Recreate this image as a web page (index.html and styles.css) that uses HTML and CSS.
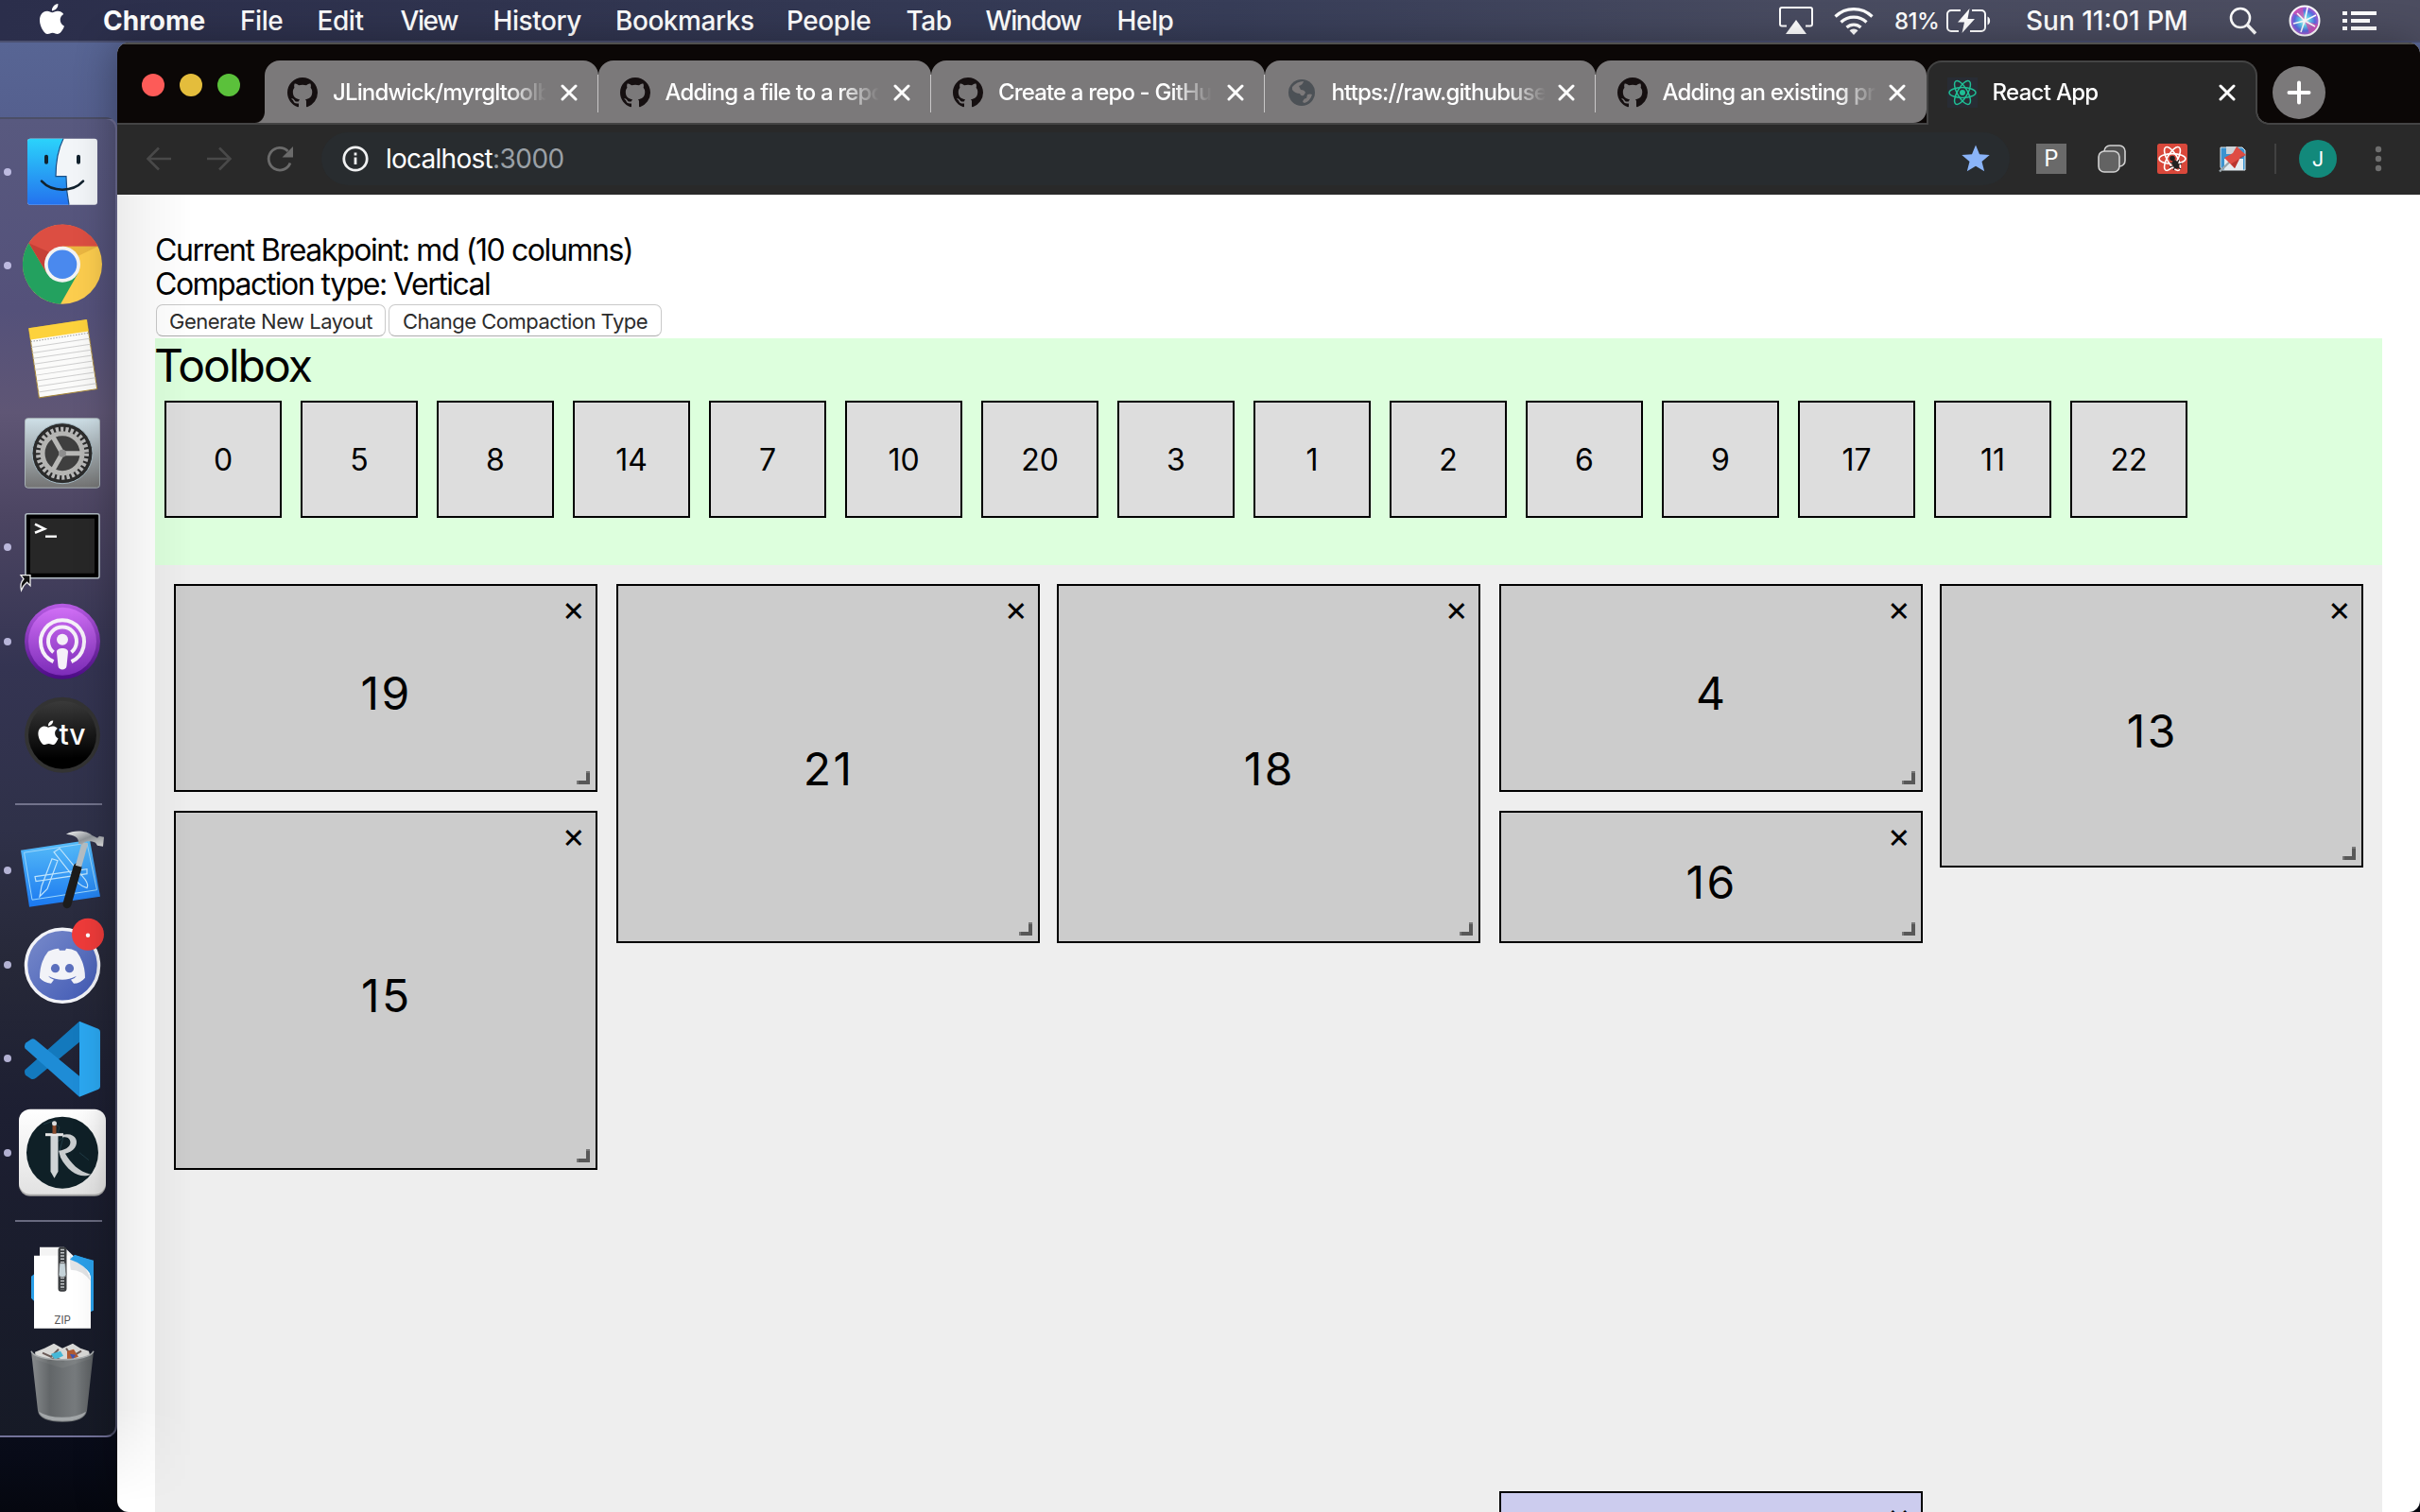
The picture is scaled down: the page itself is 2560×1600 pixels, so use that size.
FILE: index.html
```html
<!DOCTYPE html>
<html lang="en">
<head>
<meta charset="utf-8">
<title>React App</title>
<link rel="stylesheet" href="styles.css">
</head>
<body>
<svg class="defs" aria-hidden="true">
  <defs>
    <symbol id="github" viewBox="0 0 16 16"><path d="M8 0C3.58 0 0 3.58 0 8c0 3.54 2.29 6.53 5.47 7.59.4.07.55-.17.55-.38 0-.19-.01-.82-.01-1.49-2.01.37-2.53-.49-2.69-.94-.09-.23-.48-.94-.82-1.13-.28-.15-.68-.52-.01-.53.63-.01 1.08.58 1.23.82.72 1.21 1.87.87 2.33.66.07-.52.28-.87.51-1.07-1.78-.2-3.64-.89-3.64-3.95 0-.87.31-1.59.82-2.15-.08-.2-.36-1.02.08-2.12 0 0 .67-.21 2.2.82.64-.18 1.32-.27 2-.27s1.36.09 2 .27c1.53-1.04 2.2-.82 2.2-.82.44 1.1.16 1.92.08 2.12.51.56.82 1.27.82 2.15 0 3.07-1.87 3.75-3.65 3.95.29.25.54.73.54 1.48 0 1.07-.01 1.93-.01 2.2 0 .21.15.46.55.38A8.01 8.01 0 0 0 16 8c0-4.42-3.58-8-8-8z"/></symbol>
    <symbol id="apple" viewBox="0 0 24 24"><path d="M12.152 6.896c-.948 0-2.415-1.078-3.96-1.04-2.04.027-3.91 1.183-4.961 3.014-2.117 3.675-.546 9.103 1.519 12.09 1.013 1.454 2.208 3.09 3.792 3.039 1.52-.065 2.09-.987 3.935-.987 1.831 0 2.35.987 3.96.948 1.637-.026 2.676-1.48 3.676-2.948 1.156-1.688 1.636-3.325 1.662-3.415-.039-.013-3.182-1.221-3.22-4.857-.026-3.04 2.48-4.494 2.597-4.559-1.429-2.09-3.623-2.324-4.39-2.376-2-.156-3.675 1.09-4.61 1.09zM15.53 3.83c.843-1.012 1.4-2.427 1.245-3.83-1.207.052-2.662.805-3.532 1.818-.78.896-1.454 2.338-1.273 3.714 1.338.104 2.715-.688 3.559-1.701"/></symbol>
    <symbol id="cross" viewBox="0 0 18 18"><path d="M2 2l14 14M16 2L2 16" fill="none" stroke="#fff" stroke-width="3" stroke-linecap="round"/></symbol>
    <symbol id="atom" viewBox="-16 -16 32 32"><g fill="none"><ellipse rx="14" ry="5.4"/><ellipse rx="14" ry="5.4" transform="rotate(60)"/><ellipse rx="14" ry="5.4" transform="rotate(120)"/></g></symbol>
    <linearGradient id="finderBlue" x2="0" y2="1"><stop offset="0" stop-color="#2bd3fb"/><stop offset="1" stop-color="#2472ee"/></linearGradient>
    <linearGradient id="prefsBg" x2="0" y2="1"><stop offset="0" stop-color="#cfe0e8"/><stop offset="1" stop-color="#737373"/></linearGradient>
    <linearGradient id="podBg" x2="0" y2="1"><stop offset="0" stop-color="#d06ff5"/><stop offset="1" stop-color="#7c2cb8"/></linearGradient>
    <linearGradient id="podRim" x2="0" y2="1"><stop offset="0" stop-color="#b85ce4"/><stop offset="1" stop-color="#4b0b85"/></linearGradient>
    <linearGradient id="tvBg" x2="0" y2="1"><stop offset="0" stop-color="#3a3a3a"/><stop offset=".85" stop-color="#000"/></linearGradient>
    <linearGradient id="xcodeBg" x2="0" y2="1"><stop offset="0" stop-color="#57bdf8"/><stop offset="1" stop-color="#1a78f0"/></linearGradient>
    <linearGradient id="steel" x2="1" y2="1"><stop offset="0" stop-color="#f4f4f4"/><stop offset=".5" stop-color="#8f9499"/><stop offset="1" stop-color="#e8e8e8"/></linearGradient>
    <linearGradient id="discordBg" x2="1" y2="1"><stop offset="0" stop-color="#7a8ccb"/><stop offset="1" stop-color="#3f58b4"/></linearGradient>
    <linearGradient id="runeBg" x2="0" y2="1"><stop offset="0" stop-color="#fff"/><stop offset="1" stop-color="#e2e2e2"/></linearGradient>
    <linearGradient id="binBg"><stop offset="0" stop-color="#8d9092"/><stop offset=".3" stop-color="#65696b"/><stop offset=".7" stop-color="#7b7f81"/><stop offset="1" stop-color="#5c6062"/></linearGradient>
    <radialGradient id="siriBg"><stop offset="0" stop-color="#fff"/><stop offset=".35" stop-color="#5fd0ee"/><stop offset=".7" stop-color="#5a6be0"/><stop offset="1" stop-color="#c45bd0"/></radialGradient>
  </defs>
</svg>

<header class="menubar">
  <svg class="apple-logo"><use href="#apple"/></svg>
  <nav class="menus">
    <span class="app-name">Chrome</span><span>File</span><span>Edit</span><span class="tight">View</span><span>History</span><span>Bookmarks</span><span>People</span><span>Tab</span><span class="tight">Window</span><span>Help</span>
  </nav>
  <div class="status">
    <svg width="36" height="30" viewBox="0 0 36 30"><path d="M8 20.500H3a2 2 0 0 1-2-2V3a2 2 0 0 1 2-2h30a2 2 0 0 1 2 2v15.500a2 2 0 0 1-2 2h-5" fill="none" stroke="#fff" stroke-width="2"/><path d="M18 14l11 15H7z" fill="#fff"/></svg>
    <svg class="wifi" width="42" height="30" viewBox="0 0 42 30"><g fill="none" stroke="#fff" stroke-width="3.200"><path d="M1.500 10.500a28 28 0 0 1 39 0"/><path d="M7.500 16.500a19.500 19.500 0 0 1 27 0"/><path d="M13.500 22a11 11 0 0 1 15 0"/></g><path d="M21 30l-4.500-4.800a6.500 6.500 0 0 1 9 0z" fill="#fff"/></svg>
    <span class="battery-level">81%</span>
    <svg class="battery" width="48" height="26" viewBox="0 0 48 26"><g fill="none" stroke="#fff" stroke-width="2"><path d="M15 2H5a4 4 0 0 0-4 4v14a4 4 0 0 0 4 4h8M27 2h10a4 4 0 0 1 4 4v14a4 4 0 0 1-4 4H25"/></g><path d="M43.500 8.500c3.500 1 3.500 8 0 9z" fill="#fff"/><path d="M24.500 0L12 14.500h7L16.500 26 30 11h-7.500z" fill="#fff"/></svg>
    <span class="clock">Sun 11:01 PM</span>
    <svg class="search" width="30" height="30" viewBox="0 0 30 30"><g fill="none" stroke="#fff" stroke-width="2.600"><circle cx="12" cy="12" r="10"/><path d="M19.500 19.500L28 28.500" stroke-width="3.400"/></g></svg>
    <svg class="siri" width="34" height="34" viewBox="0 0 34 34"><circle cx="17" cy="17" r="15.500" fill="url(#siriBg)" stroke="#fff" stroke-width="2"/><path d="M17 17L5 9a14 14 0 0 1 10-6zM17 17l5 13a14 14 0 0 0 9-9z" fill="#e14fae" opacity=".7"/><path d="M17 17L29 11M17 17L5 20M17 17l-4 12M17 17l3-14M17 17l11 6M17 17l-8-8" stroke="#fff" stroke-width="1.600"/></svg>
    <svg class="list" width="36" height="20" viewBox="0 0 36 20"><path d="M0 2h5M9 2h27M0 10h5M9 10h20M0 18h5M9 18h27" stroke="#fff" stroke-width="4"/></svg>
  </div>
</header>

<main class="desktop">
  <aside class="dock">
    <div class="slot running"><svg viewBox="0 -49.700 124 99.400">
      <rect x="29" y="-35" width="74" height="70" rx="3" fill="#f2f5f8"/>
      <path d="M32-35H67c-6 12-8 26-8 40h11c0 10 1 20 3 30H32a3 3 0 0 1-3-3v-64a3 3 0 0 1 3-3z" fill="url(#finderBlue)"/>
      <path d="M67-35c-6 12-8 26-8 40h11c0 10 1 20 3 30" fill="none" stroke="#1c4f86" stroke-width="1.200"/>
      <path d="M49-16v6M83-16v6" stroke="#12222e" stroke-width="4" stroke-linecap="round"/><path d="M44 10c11 12 33 12 44 0" fill="none" stroke="#12222e" stroke-width="2.600" stroke-linecap="round"/></svg></div>
    <div class="slot running"><svg viewBox="0 -49.700 124 99.400"><g transform="translate(66 -1)">
      <circle r="42" fill="#fccd4e"/><path d="M-35.500-22.500A42 42 0 0 1 37.700-19H0L-16.500 9.500z" fill="#dc4e42"/><path d="M-35.500-22.500A42 42 0 0 0-2 42L16.500 9.500-16.500 9.500z" fill="#23a15f"/>
      <path d="M-35.500-22.500L-16.500 9.500-14-13z" fill="#b8362f" opacity=".6"/><path d="M37.700-19H0L17-9z" fill="#e0a93a" opacity=".6"/>
      <circle r="19" fill="#f3f3f3"/><circle r="15.300" fill="#4a89ee"/></g></svg></div>
    <div class="slot"><svg viewBox="0 -49.700 124 99.400"><g transform="translate(66.500 -1.500) rotate(-8.500)">
      <rect x="-31" y="-36.500" width="62" height="74" fill="#fbfbfa" stroke="#a98a3c"/><rect x="-31" y="-37" width="62" height="12.500" fill="#fdd23c"/>
      <path d="M-31-16.500h62M-31-10.500h62M-31-4.500h62M-31 1.500h62M-31 7.500h62M-31 13.500h62M-31 19.500h62M-31 25.500h62M-31 31.500h62" stroke="#cfcfcf" stroke-width="1"/><path d="M-31-22.500h62" stroke="#999" stroke-dasharray="1.500 1.500"/></g></svg></div>
    <div class="slot"><svg viewBox="0 -49.700 124 99.400">
      <rect x="26.500" y="-37" width="79" height="73.500" rx="3" fill="url(#prefsBg)" stroke="#a9b3b8"/><circle cx="66" cy="0" r="32" fill="#2b2b2b" stroke="#a6bac4" stroke-width="1"/>
      <circle cx="66" cy="0" r="25.500" fill="none" stroke="#b8b8b8" stroke-width="5" stroke-dasharray="3.200 2.140"/><circle cx="66" cy="0" r="21" fill="#3f3f3f" stroke="#b5b5b3" stroke-width="5"/>
      <path d="M66 0h20M66 0L56-17.500M66 0L56 17.500" stroke="#b8b8b6" stroke-width="5"/><circle cx="66" cy="0" r="4" fill="#8e8e8e"/></svg></div>
    <div class="slot running"><svg viewBox="0 -49.700 124 99.400"><g transform="translate(0 -2)">
      <rect x="27" y="-34" width="78" height="68" rx="2" fill="#000" stroke="#b3bec6" stroke-width="1.600"/><rect x="32" y="-29" width="68" height="58" fill="#272727"/>
      <path d="M37-23l10 5-10 4" fill="none" stroke="#fff" stroke-width="2.600"/><path d="M48-10h12" stroke="#fff" stroke-width="2.400"/>
      <path d="M22 31h10v11l-3.500-3.500q-4 3-6 8.500-2-7 2.500-12z" fill="#111" stroke="#eee" stroke-width="1.300"/></g></svg></div>
    <div class="slot running"><svg viewBox="0 -49.700 124 99.400"><g transform="translate(66 0)">
      <circle r="40" fill="url(#podRim)"/><circle r="36" fill="url(#podBg)"/>
      <g fill="none" stroke="#f5f0f8" stroke-width="4"><path d="M-9.500 21.500A23 23 0 1 1 9.500 21.500"/><path d="M-9.500 11.500A15 15 0 1 1 9.500 11.500"/></g>
      <circle cy="-2" r="6" fill="#f5f0f8"/><path d="M-6 11c0-5 12-5 12 0l-1.500 15c-.5 5-8.500 5-9 0z" fill="#f5f0f8"/></g></svg></div>
    <div class="slot"><svg viewBox="0 -49.700 124 99.400"><circle cx="66" cy="0" r="40" fill="#333"/><circle cx="66" cy="0" r="36" fill="url(#tvBg)"/>
      <use href="#apple" x="38" y="-15.500" width="26" height="26" fill="#fff"/><text x="62.500" y="10" class="tv-label">tv</text></svg></div>
    <div class="divider"></div>
    <div class="slot running"><svg viewBox="0 -49.700 124 99.400">
      <path d="M22-22L95-33 106 27 31 38z" fill="url(#xcodeBg)"/><path d="M25.500-19.500L92-29.500 102.500 20 34 30.500z" fill="none" stroke="#9cd6fb"/>
      <g fill="none" stroke="#bfe4fc" stroke-width="1.200"><path d="M37 6l55-8v5l-54 8z"/><path d="M55-13l6 2-11 30-8 8 2-11zM57-20l6-4 27 33q4 6 2 9-6-2-9-5z"/></g>
      <path d="M82-4L71 35" stroke="#1c1c1c" stroke-width="9" stroke-linecap="round"/><path d="M90-30L83-5" stroke="#b4bec4" stroke-width="6.500"/>
      <path d="M70-39c8-5 22-4 27 1l6 3 2-2 5 1-1 10-6-1-2-3c-7-3-13-1-14 2l-4-1c1-7-5-9-13-10z" fill="url(#steel)"/></svg></div>
    <div class="slot running"><svg viewBox="0 -49.700 124 99.400"><g transform="translate(0 1)"><circle cx="66" cy="0" r="38.500" fill="url(#discordBg)" stroke="#f2f3f8" stroke-width="3.500"/>
      <path d="M51-15q7-3 11-3l1 2h6l1-2q6 0 11 3 9 12 9 28-5 6-12 6l-3-4q4-1 6-4-15 8-30 0 2 3 6 4l-3 4q-8-1-12-6 0-17 9-28z" fill="#f2f3f8"/><circle cx="58.500" cy="3" r="4.600" fill="#5b6fbd"/><circle cx="73.500" cy="3" r="4.600" fill="#5b6fbd"/>
      <circle cx="93" cy="-33" r="17" fill="#ef3b3a"/><circle cx="93" cy="-32" r="2.200" fill="#fff"/></g></svg></div>
    <div class="slot running"><svg viewBox="0 -49.700 124 99.400">
      <path d="M26 13q0-2 2-3L84-40v22L38 20q-3 2-5 1l-6-4q-1-2-1-4z" fill="#1379bd"/><path d="M26-13q0 2 2 3L84 40V18L38-20q-3-2-5-1l-6 4q-1 2-1 4z" fill="#1e8cd6"/>
      <path d="M84-40l20 8q2 1 2 3v58q0 2-2 3L84 40z" fill="#2ba7f0"/></svg></div>
    <div class="slot running"><svg viewBox="0 -49.700 124 99.400">
      <rect x="20" y="-45" width="92" height="91" rx="12" fill="#a9a9a9"/><rect x="20" y="-46" width="92" height="90" rx="12" fill="url(#runeBg)"/><circle cx="66" cy="0" r="38" fill="#0f2027"/>
      <path d="M46 -30l9-3 8 6-6 18 10-7-4 14M84 0l10 8" fill="none" stroke="#1f3a44" stroke-width="1"/>
      <path d="M53.500-18h8v38l-4 7-4-7z" fill="#cfd3d5"/><path d="M48-19h19" stroke="#e6e6e6" stroke-width="3"/><path d="M57.500-29v9" stroke="#8a4a2c" stroke-width="4"/><circle cx="57.500" cy="-31" r="2.500" fill="#ddd"/>
      <path d="M66-19c14-3 18 7 13 14-2 3-6 5-10 6 6 10 14 19 27 22-10 5-24-2-32-18l-2-7c9-1 14-6 12-11-1-3-5-4-8-3z" fill="#c9ccce"/></svg></div>
    <div class="divider"></div>
    <div class="slot"><svg viewBox="0 -49.700 124 99.400">
      <path d="M33-12l5-4v32l-5-5zM80-34l19 5v53l-9 4z" fill="#2a9fe8"/><path d="M42-43h26l27 26v50H42z" fill="#f4f4f4"/><path d="M36-34h38q14 0 22 22v55H36z" fill="#fff"/><path d="M74-34q0 12 1 15 12 0 21 12-4-18-22-27z" fill="#e2e4e6"/><path d="M74-30l5-5 18 6v16q-8-12-23-17z" fill="#2a9fe8"/>
      <rect x="61.500" y="-43" width="9" height="47" rx="3" fill="#3a3d40"/><path d="M66-41V2" stroke="#c2c6c9" stroke-width="4" stroke-dasharray="1.500 1.800"/><path d="M63-26h6l1 12q0 3-4 3t-4-3z" fill="#c5d3d9" stroke="#666" stroke-width=".8"/>
      <text x="66" y="38" class="zip-label">ZIP</text></svg></div>
    <div class="slot"><svg viewBox="0 -49.700 124 99.400">
      <path d="M37-32l10-4 10-5 9 5 11-5 8 5 9 3 2 8-30 10-28-9z" fill="#d9d9d7"/><path d="M45-31l9 4 8-8M70-36l6 9 10-6M50-22l8-4 10 4" stroke="#6a5b58" stroke-width="2" fill="none"/><path d="M54-30l10-3 3 5-9 4z" fill="#46b8d8"/><path d="M71-33l7-2 5 8-12 4z" fill="#b05b34"/><path d="M74-30l6 1-3 5z" fill="#4054b0"/>
      <path d="M33-33c4 12 62 12 66 0l-7 63q-2 12-26 12t-26-12z" fill="url(#binBg)" opacity=".96"/><path d="M33-33c4 12 62 12 66 0" fill="none" stroke="#a9adaf" stroke-width="1.500"/><path d="M41 31q3 10 25 10t25-10q-9 6-25 6t-25-6z" fill="#a3a7a9"/></svg></div>
  </aside>

  <section class="window">
    <div class="tabstrip">
      <div class="lights"><i class="close"></i><i class="minimise"></i><i class="zoom"></i></div>
      <div class="tab first"><svg class="favicon"><use href="#github"/></svg><span class="title">JLindwick/myrgltoolb</span><svg class="x"><use href="#cross"/></svg></div>
      <div class="tab"><svg class="favicon"><use href="#github"/></svg><span class="title">Adding a file to a repo</span><svg class="x"><use href="#cross"/></svg></div>
      <div class="tab"><svg class="favicon"><use href="#github"/></svg><span class="title">Create a repo - GitHu</span><svg class="x"><use href="#cross"/></svg></div>
      <div class="tab narrow"><svg class="favicon" viewBox="0 0 32 32"><circle cx="16" cy="16" r="14" fill="#4c5156"/><path d="M6 10q5-6 12-6-1 4-5 5l2 4q4 0 5 3l-2 3q-3 1-4-2-5 0-8-4zM17 26q1-4 4-4l1-4q3-1 5 0-2 7-8 9z" fill="#7c797a"/></svg><span class="title">https://raw.githubuse</span><svg class="x"><use href="#cross"/></svg></div>
      <div class="tab narrow last"><svg class="favicon"><use href="#github"/></svg><span class="title">Adding an existing pr</span><svg class="x"><use href="#cross"/></svg></div>
      <div class="tab narrow active"><svg class="favicon react" viewBox="0 0 32 32"><rect width="32" height="32" fill="#282c34"/><use href="#atom" width="32" height="32" stroke="#1fbf95" stroke-width="1.500"/><circle cx="16" cy="16" r="3" fill="#1fbf95"/></svg><span class="title">React App</span><svg class="x"><use href="#cross"/></svg></div>
      <div class="new-tab"><svg width="24" height="24" viewBox="0 0 24 24"><path d="M12 1.500v21M1.500 12h21" stroke="#fff" stroke-width="4" stroke-linecap="round"/></svg></div>
    </div>

    <div class="toolbar">
      <svg class="nav-icon" viewBox="0 0 32 32"><path d="M29 16H5M16 4.500L4.500 16 16 27.500" fill="none" stroke="#494949" stroke-width="2.600"/></svg>
      <svg class="nav-icon" viewBox="0 0 32 32"><path d="M3 16h24M16 4.500L27.500 16 16 27.500" fill="none" stroke="#494949" stroke-width="2.600"/></svg>
      <svg class="nav-icon" viewBox="0 0 32 32"><path d="M27 20.500A11.800 11.800 0 1 1 24.500 8" fill="none" stroke="#6b6b6b" stroke-width="2.800"/><path d="M30 3v11.500H18.500z" fill="#6b6b6b"/></svg>
      <div class="omnibox">
        <svg width="32" height="32" viewBox="0 0 32 32"><circle cx="16" cy="16" r="12.200" fill="none" stroke="#f0f1f2" stroke-width="2.800"/><path d="M16 14.500V22M16 9.500v3" stroke="#f0f1f2" stroke-width="2.800"/></svg>
        <span class="host">localhost</span><span class="port">:3000</span>
        <svg class="star" width="32" height="32" viewBox="0 0 32 32"><path d="M16 1.500l4 9.800 10.700.8-8.200 6.800 2.700 10.300L16 23.700l-9.200 5.500 2.700-10.300-8.200-6.800 10.700-.8z" fill="#8ab4f8"/></svg>
      </div>
      <div class="ext-p">P</div>
      <svg class="ext" viewBox="0 0 32 32"><g stroke="#d2d2d2" stroke-width="1.600"><rect x="8" y="2" width="22" height="22" rx="6" fill="#4d4d4d"/><rect x="2" y="8" width="22" height="22" rx="6" fill="#636363"/></g></svg>
      <svg class="ext" viewBox="0 0 32 32"><rect width="32" height="32" rx="2.500" fill="#d9483b"/><use href="#atom" width="32" height="32" stroke="#fff" stroke-width="1.600"/><g stroke="#222" stroke-width="1.300"><path d="M14 20l11 7M13 25l13-4M17 28l6-11"/></g><circle cx="16" cy="15.500" r="2.800" fill="#222"/><ellipse cx="19.500" cy="22" rx="3.200" ry="5" transform="rotate(-30 19.500 22)" fill="#222"/></svg>
      <svg class="ext" viewBox="0 0 32 32"><path d="M3 4h23l3 3v21H5l-2-3z" fill="#3b93d0" stroke="#dfe9ef"/><rect x="9" y="3" width="11" height="8" fill="#ccd3d8"/><rect x="7" y="16" width="20" height="12" fill="#e4ecf1"/><path d="M14 18L2 29.500" stroke="#9aa6ad" stroke-width="2.400"/><path d="M20 3l10 9-6 2-6 12L7 15l9-5z" fill="#df4c43"/><path d="M30 12l-6 2-6 12-4-4.500z" fill="#b93630"/></svg>
      <div class="bar-divider"></div>
      <div class="avatar">J</div>
      <svg class="dots" width="8" height="28" viewBox="0 0 8 28"><g fill="#6e6e6e"><circle cx="4" cy="4" r="3.200"/><circle cx="4" cy="14" r="3.200"/><circle cx="4" cy="24" r="3.200"/></g></svg>
    </div>

    <div class="page">
      <div class="info">Current Breakpoint: md (10 columns)</div>
      <div class="info second">Compaction type: Vertical</div>
      <div class="buttons"><button class="generate">Generate New Layout</button><button class="change">Change Compaction Type</button></div>
      <div class="toolbox">
        <div class="toolbox-title">Toolbox</div>
        <div class="toolbox-items">
          <div>0</div><div>5</div><div>8</div><div>14</div><div>7</div><div>10</div><div>20</div><div>3</div><div>1</div><div>2</div><div>6</div><div>9</div><div>17</div><div>11</div><div>22</div>
        </div>
      </div>
      <div class="layout">
        <div class="item c1 r1 h3"><span>19</span><b>×</b></div>
        <div class="item c1 r4 h5"><span>15</span><b>×</b></div>
        <div class="item c2 r1 h5"><span>21</span><b>×</b></div>
        <div class="item c3 r1 h5"><span>18</span><b>×</b></div>
        <div class="item c4 r1 h3"><span>4</span><b>×</b></div>
        <div class="item c4 r4 h2"><span>16</span><b>×</b></div>
        <div class="item c5 r1 h4"><span>13</span><b>×</b></div>
        <div class="item c4 r13 h2 static"><b>×</b></div>
      </div>
    </div>
  </section>
</main>
</body>
</html>
```
FILE: styles.css
```css
*, *::before, *::after { box-sizing: border-box; }
body {
  margin: 0;
  width: 2560px;
  height: 1600px;
  overflow: hidden;
  font-family: Inter, "Liberation Sans", sans-serif;
  background: linear-gradient(180deg, #596897 0, #55608f 120px, #2a2b45 800px, #080b18 1540px, #05070f 1600px);
}
.defs { position: absolute; width: 0; height: 0; }
svg { display: block; flex: none; overflow: visible; }

/* menu bar */
.menubar {
  display: flex;
  align-items: center;
  height: 45px;
  padding: 1px 46px 0 39px;
  color: #fff;
  font-size: 28px;
  font-weight: 500;
  background: linear-gradient(90deg, #2b2e4b 0, #30344f 500px, #373d58 1300px, #484b60 1900px, #4c4d60 100%);
  border-bottom: 2px solid #4b5070;
}
.apple-logo { width: 32px; height: 32px; margin-top: -5px; fill: #fff; }
.menus {
  display: grid;
  grid-template-columns: 145px 81.5px 88px 98px 129.5px 181px 126.5px 84px 139px 70px;
  margin-left: 38px;
  letter-spacing: -0.45px;
  white-space: nowrap;
}
.menus .app-name { font-weight: 700; letter-spacing: 0; }
.menus .tight { letter-spacing: -1.4px; }
.status { display: flex; align-items: center; margin-left: auto; white-space: nowrap; }
.wifi { margin-left: 22px; }
.battery-level { margin-left: 22px; font-size: 24px; letter-spacing: -0.5px; width: 55px; }
.battery { width: 48px; }
.clock { margin-left: 36px; width: 172px; }
.search { margin-left: 43px; }
.siri { margin-left: 33px; }
.list { margin-left: 23px; }

.desktop { display: flex; height: 1555px; }

/* dock */
.dock {
  display: flex;
  flex-direction: column;
  flex: none;
  width: 124px;
  height: 1397px;
  margin-top: 79px;
  padding-top: 6px;
  border: 2px solid rgba(150, 150, 190, .42);
  border-left: 0;
  border-radius: 0 12px 12px 0;
  background: linear-gradient(180deg, #58597f 0, #54517a 200px, #5f5675 310px, #4c4562 420px, #343452 580px, #2f3149 750px, #262838 900px, #1d1f32 1050px, #161a26 1397px);
}
.slot { display: flex; align-items: center; flex: none; height: 99.4px; }
.slot svg { width: 124px; height: 99.4px; margin-left: -12px; }
.slot::before { content: ""; flex: none; width: 8px; height: 8px; margin-left: 4px; border-radius: 50%; }
.running::before { background: rgba(215, 212, 250, .8); }
.divider { flex: none; height: 44px; padding: 22px 14px 0 16px; }
.divider::before { content: ""; display: block; height: 2px; background: rgba(170, 170, 195, .55); }
.tv-label { font: 500 30px Inter, sans-serif; fill: #fff; }
.zip-label { font: 11.5px Inter, sans-serif; fill: #555; text-anchor: middle; }

/* browser window */
.window {
  position: relative;
  display: flex;
  flex-direction: column;
  width: 2436px;
  height: 1555px;
  overflow: hidden;
  border-radius: 12px;
  background: #fff;
  box-shadow: -4px 0 40px rgba(0, 0, 0, .3);
}
/* shade the dock casts on the page */
.window::after {
  content: "";
  position: absolute;
  left: 0;
  top: 161px;
  bottom: 0;
  width: 80px;
  background: linear-gradient(90deg, rgba(0, 0, 0, .075), rgba(0, 0, 0, .035) 32px, rgba(0, 0, 0, 0));
  -webkit-mask-image: linear-gradient(0deg, transparent 10px, #000 110px);
  mask-image: linear-gradient(0deg, transparent 10px, #000 110px);
}
.tabstrip {
  display: flex;
  align-items: flex-end;
  flex: none;
  height: 87px;
  background: #0b0706;
  border-top: 2px solid #50504e;
  border-bottom: 2px solid #444;
}
.lights { display: flex; gap: 16px; margin: 0 26px 28px; }
.lights i { width: 24px; height: 24px; border-radius: 50%; background: #fd5b58; }
.lights .minimise { background: #e4bd3c; }
.lights .zoom { background: #5bc13b; }
.tab {
  position: relative;
  display: flex;
  align-items: center;
  flex: none;
  width: 352.5px;
  height: 66px;
  padding: 2px 22px 0 23px;
  border-radius: 16px 16px 0 0;
  color: #fff;
  background: #7b797a;
}
.tab.first { padding-left: 24px; }
.tab.narrow { width: 350px; }
.tab.last { border-radius: 16px 16px 14px 0; }
.tab.first::before {
  content: "";
  position: absolute;
  left: -10px;
  bottom: 0;
  width: 10px;
  height: 12px;
  background: radial-gradient(ellipse at 0 0, transparent 9.5px, #7b797a 10.5px);
}
.tab:not(.active):not(.last)::after {
  content: "";
  position: absolute;
  right: -1px;
  top: 15px;
  width: 2px;
  height: 40px;
  background: #c8c7c7;
}
.tab.active {
  height: 68px;
  margin-bottom: -2px;
  background: #292929;
  border: 2px solid #444;
  border-bottom: 0;
  padding: 0 21px 2px 20px;
}
.tab.active::after {
  content: "";
  position: absolute;
  right: -14px;
  bottom: 0;
  width: 14px;
  height: 14px;
  background: radial-gradient(circle at 100% 0, transparent 11.5px, #444 12px, #444 13.5px, #292929 14px);
}
.favicon { width: 32px; height: 32px; fill: #150f10; }
.title {
  width: 226px;
  margin-left: 16px;
  font-size: 24px;
  font-weight: 500;
  letter-spacing: -0.85px;
  line-height: 34px;
  white-space: nowrap;
  -webkit-mask-image: linear-gradient(90deg, #000 185px, transparent 226px);
  mask-image: linear-gradient(90deg, #000 185px, transparent 226px);
}
.active .title { letter-spacing: -0.7px; }
.x { width: 18px; height: 18px; margin-left: auto; }
.new-tab {
  display: flex;
  align-items: center;
  justify-content: center;
  width: 56px;
  height: 56px;
  margin: 0 0 4px 16px;
  border-radius: 50%;
  background: #7b797a;
}
.toolbar {
  display: flex;
  align-items: center;
  flex: none;
  height: 74px;
  padding: 0 0 2px 28px;
  background: #292929;
}
.nav-icon { width: 32px; height: 32px; margin-right: 32px; }
.omnibox {
  display: flex;
  align-items: center;
  width: 1786px;
  height: 56px;
  margin-left: -4px;
  padding: 0 20px;
  border-radius: 28px;
  background: #282c2f;
  font-size: 28px;
}
.host { margin-left: 16px; color: #fff; letter-spacing: -0.75px; }
.port { color: #9aa0a6; letter-spacing: -0.5px; }
.star { margin-left: auto; }
.ext-p {
  width: 32px;
  height: 32px;
  margin-left: 28px;
  background: #6a6a6a;
  color: #fff;
  font: 24px/32px Inter, sans-serif;
  text-align: center;
}
.ext { width: 32px; height: 32px; margin-left: 32px; }
.bar-divider { width: 2px; height: 32px; margin-left: 28px; background: #414141; }
.avatar {
  width: 40px;
  height: 40px;
  margin-left: 24px;
  border-radius: 50%;
  background: #12897b;
  color: #fff;
  font-size: 22px;
  line-height: 40px;
  text-align: center;
}
.dots { margin-left: 40px; }

/* page */
.page { display: flex; flex-direction: column; flex: 1; min-height: 0; padding: 40px 40px 0; color: #000; }
.info { flex: none; height: 36px; line-height: 38px; font-size: 32px; letter-spacing: -1.41px; }
.info.second { letter-spacing: -1.5px; }
.buttons { display: flex; flex: none; gap: 3px; height: 40px; padding: 4px 1px 2px; }
.buttons button {
  height: 34px;
  padding: 1px 0 0;
  border: 1.5px solid #c9c9c9;
  border-bottom-color: #adadad;
  border-radius: 7px;
  background: #fff;
  color: #2c2c2c;
  font: 22px/30px Inter, sans-serif;
  letter-spacing: -0.52px;
  white-space: nowrap;
}
.generate { width: 243px; }
.change { width: 289px; }
.toolbox { height: 240px; flex: none; background: #dfd; }
.toolbox-title { height: 56px; margin-left: -1px; line-height: 58px; font-size: 48px; letter-spacing: -1.95px; }
.toolbox-items { display: flex; gap: 20px; padding: 10px; }
.toolbox-items div {
  width: 124px;
  height: 124px;
  border: 2px solid #000;
  background: #ddd;
  font-size: 32px;
  line-height: 122px;
  text-align: center;
}
.layout {
  display: grid;
  flex: 1;
  grid-template-columns: 448px 20px 448px 18px 448px 20px 448px 18px 448px;
  grid-auto-rows: 60px;
  row-gap: 20px;
  min-height: 0;
  padding: 20px;
  background: #eee;
}
.item {
  position: relative;
  display: flex;
  align-items: center;
  justify-content: center;
  border: 2px solid #000;
  background: #ccc;
  font-size: 48px;
}
.item span { padding-top: 10px; letter-spacing: 2.5px; margin-right: -1.5px; }
.item::after {
  content: "";
  position: absolute;
  right: 6px;
  bottom: 6px;
  width: 14px;
  height: 14px;
  background:
    linear-gradient(90deg, #777 2px, #585858 2px) 0 100% / 14px 4px no-repeat,
    linear-gradient(180deg, #777 2px, #585858 2px) 100% 0 / 4px 14px no-repeat;
}
.item b {
  position: absolute;
  top: 0;
  right: 11px;
  font-size: 37px;
  font-weight: 400;
  line-height: 48px;
}
.static { background: #cce; }
.c1 { grid-column: 1; }
.c2 { grid-column: 3; }
.c3 { grid-column: 5; }
.c4 { grid-column: 7; }
.c5 { grid-column: 9; }
.r1 { grid-row-start: 1; }
.r4 { grid-row-start: 4; }
.r13 { grid-row-start: 13; }
.h2 { grid-row-end: span 2; }
.h3 { grid-row-end: span 3; }
.h4 { grid-row-end: span 4; }
.h5 { grid-row-end: span 5; }
```
